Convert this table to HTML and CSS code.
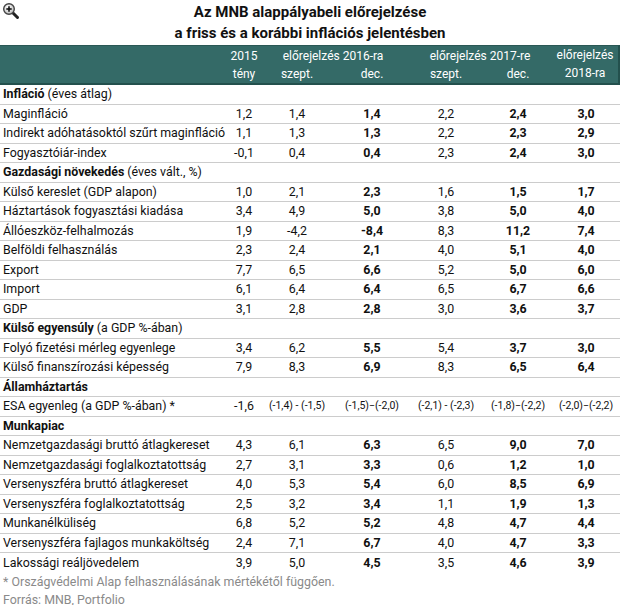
FILE: index.html
```html
<!DOCTYPE html>
<html lang="hu">
<head>
<meta charset="utf-8">
<title>MNB előrejelzés</title>
<link rel="stylesheet" href="styles.css">
</head>
<body>
<div class="page">
  <svg class="zoom-icon" width="20" height="20" viewBox="0 0 20 20" aria-hidden="true">
    <defs>
      <radialGradient id="lens" cx="0.4" cy="0.35" r="0.7">
        <stop offset="0" stop-color="#ffffff"/>
        <stop offset="1" stop-color="#b8b8b8"/>
      </radialGradient>
    </defs>
    <line x1="11.5" y1="11.5" x2="16.5" y2="16.5" stroke="#222" stroke-width="3" stroke-linecap="round"/>
    <circle cx="8" cy="8" r="5.3" fill="url(#lens)" stroke="#444" stroke-width="1.4"/>
    <line x1="5.3" y1="8" x2="10.7" y2="8" stroke="#111" stroke-width="1.6"/>
    <line x1="8" y1="5.3" x2="8" y2="10.7" stroke="#111" stroke-width="1.6"/>
  </svg>
  <h1 class="title">Az MNB alappályabeli előrejelzése<br>a friss és a korábbi inflációs jelentésben</h1>
  <table class="data">
    <colgroup>
      <col class="c-label"><col class="c-1"><col class="c-2"><col class="c-3"><col class="c-4"><col class="c-5"><col class="c-6">
    </colgroup>
    <thead>
      <tr class="h1">
        <th rowspan="2" class="blank"></th>
        <th>2015</th>
        <th colspan="2">előrejelzés 2016-ra</th>
        <th colspan="2">előrejelzés 2017-re</th>
        <th rowspan="2" class="last">előrejelzés<br>2018-ra</th>
      </tr>
      <tr class="h2">
        <th>tény</th>
        <th>szept.</th>
        <th>dec.</th>
        <th>szept.</th>
        <th>dec.</th>
      </tr>
    </thead>
    <tbody>
      <tr class="sec"><td colspan="7"><b>Infláció</b> (éves átlag)</td></tr>
      <tr><td>Maginfláció</td><td>1,2</td><td>1,4</td><td class="b">1,4</td><td>2,2</td><td class="b">2,4</td><td class="b">3,0</td></tr>
      <tr><td>Indirekt adóhatásoktól szűrt maginfláció</td><td>1,1</td><td>1,3</td><td class="b">1,3</td><td>2,2</td><td class="b">2,3</td><td class="b">2,9</td></tr>
      <tr><td>Fogyasztóiár-index</td><td>-0,1</td><td>0,4</td><td class="b">0,4</td><td>2,3</td><td class="b">2,4</td><td class="b">3,0</td></tr>
      <tr class="sec"><td colspan="7"><b>Gazdasági növekedés</b> (éves vált., %)</td></tr>
      <tr><td>Külső kereslet (GDP alapon)</td><td>1,0</td><td>2,1</td><td class="b">2,3</td><td>1,6</td><td class="b">1,5</td><td class="b">1,7</td></tr>
      <tr><td>Háztartások fogyasztási kiadása</td><td>3,4</td><td>4,9</td><td class="b">5,0</td><td>3,8</td><td class="b">5,0</td><td class="b">4,0</td></tr>
      <tr><td>Állóeszköz-felhalmozás</td><td>1,9</td><td>-4,2</td><td class="b">-8,4</td><td>8,3</td><td class="b">11,2</td><td class="b">7,4</td></tr>
      <tr><td>Belföldi felhasználás</td><td>2,3</td><td>2,4</td><td class="b">2,1</td><td>4,0</td><td class="b">5,1</td><td class="b">4,0</td></tr>
      <tr><td>Export</td><td>7,7</td><td>6,5</td><td class="b">6,6</td><td>5,2</td><td class="b">5,0</td><td class="b">6,0</td></tr>
      <tr><td>Import</td><td>6,1</td><td>6,4</td><td class="b">6,4</td><td>6,5</td><td class="b">6,7</td><td class="b">6,6</td></tr>
      <tr><td>GDP</td><td>3,1</td><td>2,8</td><td class="b">2,8</td><td>3,0</td><td class="b">3,6</td><td class="b">3,7</td></tr>
      <tr class="sec"><td colspan="7"><b>Külső egyensúly</b> (a GDP %-ában)</td></tr>
      <tr><td>Folyó fizetési mérleg egyenlege</td><td>3,4</td><td>6,2</td><td class="b">5,5</td><td>5,4</td><td class="b">3,7</td><td class="b">3,0</td></tr>
      <tr><td>Külső finanszírozási képesség</td><td>7,9</td><td>8,3</td><td class="b">6,9</td><td>8,3</td><td class="b">6,5</td><td class="b">6,4</td></tr>
      <tr class="sec"><td colspan="7"><b>Államháztartás</b></td></tr>
      <tr class="esa"><td>ESA egyenleg (a GDP %-ában) *</td><td class="n">-1,6</td><td>(-1,4) - (-1,5)</td><td>(-1,5)−(-2,0)</td><td>(-2,1) - (-2,3)</td><td>(-1,8)−(-2,2)</td><td>(-2,0)−(-2,2)</td></tr>
      <tr class="sec"><td colspan="7"><b>Munkapiac</b></td></tr>
      <tr><td>Nemzetgazdasági bruttó átlagkereset</td><td>4,3</td><td>6,1</td><td class="b">6,3</td><td>6,5</td><td class="b">9,0</td><td class="b">7,0</td></tr>
      <tr><td>Nemzetgazdasági foglalkoztatottság</td><td>2,7</td><td>3,1</td><td class="b">3,3</td><td>0,6</td><td class="b">1,2</td><td class="b">1,0</td></tr>
      <tr><td>Versenyszféra bruttó átlagkereset</td><td>4,0</td><td>5,3</td><td class="b">5,4</td><td>6,0</td><td class="b">8,5</td><td class="b">6,9</td></tr>
      <tr><td>Versenyszféra foglalkoztatottság</td><td>2,5</td><td>3,2</td><td class="b">3,4</td><td>1,1</td><td class="b">1,9</td><td class="b">1,3</td></tr>
      <tr><td>Munkanélküliség</td><td>6,8</td><td>5,2</td><td class="b">5,2</td><td>4,8</td><td class="b">4,7</td><td class="b">4,4</td></tr>
      <tr><td>Versenyszféra fajlagos munkaköltség</td><td>2,4</td><td>7,1</td><td class="b">6,7</td><td>4,0</td><td class="b">4,7</td><td class="b">3,3</td></tr>
      <tr class="final"><td>Lakossági reáljövedelem</td><td>3,9</td><td>5,0</td><td class="b">4,5</td><td>3,5</td><td class="b">4,6</td><td class="b">3,9</td></tr>
    </tbody>
  </table>
  <div class="notes">
    <p>* Országvédelmi Alap felhasználásának mértékétől függően.</p>
    <p>Forrás: MNB, Portfolio</p>
  </div>
</div>
</body>
</html>
```

FILE: styles.css
```css
html, body {
  margin: 0;
  padding: 0;
  background: #ffffff;
}

.page {
  position: relative;
  width: 620px;
  font-family: Roboto, "Liberation Sans", Arial, sans-serif;
  color: #111;
}

.zoom-icon {
  position: absolute;
  left: 1px;
  top: 1px;
}

.title {
  margin: 0;
  padding-top: 2px;
  height: 43px;
  font-size: 15px;
  line-height: 21px;
  font-weight: 700;
  text-align: center;
  color: #111;
}

.data {
  width: 620px;
  table-layout: fixed;
  border-collapse: separate;
  border-spacing: 0;
  font-size: 12.4px;
}

.c-label { width: 230px; }
.c-1 { width: 28px; }
.c-2 { width: 78px; }
.c-3 { width: 72px; }
.c-4 { width: 76px; }
.c-5 { width: 68px; }
.c-6 { width: 68px; }

.data thead th {
  box-sizing: border-box;
  background: #346a67;
  color: #fff;
  font-weight: 400;
  font-size: 12px;
  padding: 0;
  text-align: center;
  white-space: nowrap;
}

.data thead tr.h1 th {
  height: 19.5px;
  line-height: 18px;
  border-top: 1px solid #2a5855;
}

.data thead tr.h2 th {
  height: 19.5px;
  line-height: 17px;
  border-bottom: 2px solid #23504d;
}

.data thead th.blank {
  border-bottom: 2px solid #23504d;
}

.data thead th.last {
  line-height: 19px;
  padding-bottom: 1px;
  border-bottom: 2px solid #23504d;
  border-right: 2px solid #23504d;
}

.data tbody td {
  box-sizing: border-box;
  height: 19.5px;
  line-height: 18px;
  padding: 0;
  text-align: center;
  white-space: nowrap;
  border-bottom: 1px solid #cccccc;
}

.data tbody td:first-child {
  text-align: left;
  padding-left: 3px;
}

.data tbody tr.final td {
  border-bottom: none;
}

.data tbody td.b {
  font-weight: 700;
}

.data tbody tr.sec td b {
  font-weight: 700;
}

.data tbody tr.esa td {
  font-size: 10.5px;
}

.data tbody tr.esa td:first-child,
.data tbody tr.esa td.n {
  font-size: 12.4px;
}

.notes {
  padding-left: 3px;
  color: #8a8a8a;
  font-size: 12.4px;
  line-height: 18px;
}

.notes p {
  margin: 0;
}
```
